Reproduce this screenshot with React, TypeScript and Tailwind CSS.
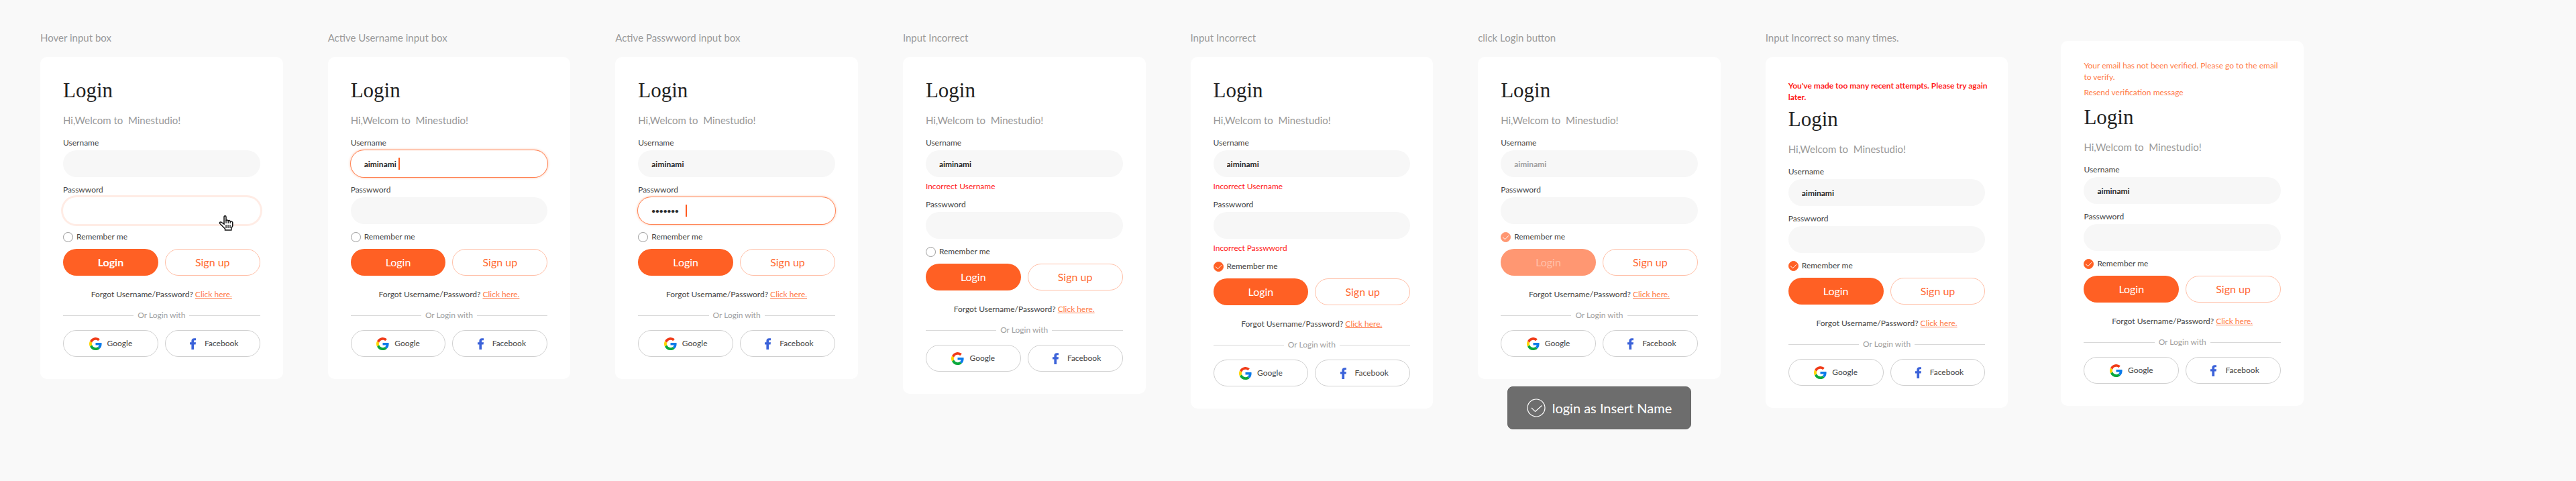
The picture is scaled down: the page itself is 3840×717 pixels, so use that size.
import { useId, type ReactNode } from 'react'
import { clsx } from 'clsx'

type FieldState = 'idle' | 'hover' | 'active'

interface LoginCardProps {
  username?: string
  password?: string
  usernameState?: FieldState
  passwordState?: FieldState
  usernameError?: string
  passwordError?: string
  remember?: boolean
  submitting?: boolean
  boldLogin?: boolean
  notice?: ReactNode
  compact?: boolean
}

function GoogleIcon() {
  return (
    <svg viewBox="0 0 48 48" className="size-[19px]" aria-hidden="true">
      <path fill="#ffd500" d="M10.6 28.7A14.2 14.2 0 0 1 10.6 19.3L2.7 13.2a24 24 0 0 0 0 21.6z" />
      <path fill="#f03a17" d="M24 9.5c3.5 0 6.7 1.2 9.2 3.6l6.9-6.9A24 24 0 0 0 2.7 13.2l7.9 6.1C12.5 13.7 17.7 9.5 24 9.5z" />
      <path fill="#0aa83c" d="M24 48c6.5 0 12-2.1 16-5.8l-7.8-6c-2.1 1.4-4.9 2.3-8.2 2.3-6.3 0-11.5-4.2-13.4-9.8l-7.9 6.1A24 24 0 0 0 24 48z" />
      <path fill="#0b7bea" d="M47 24.5c0-1.6-.2-3.1-.4-4.5H24v9h13c-.6 3-2.3 5.5-4.8 7.2l7.8 6c4.5-4.2 7-10.4 7-17.7z" />
    </svg>
  )
}

function FacebookIcon() {
  return (
    <svg viewBox="0 0 19 19" className="size-[19px]" aria-hidden="true">
      <path fill="#3b62d9" d="M7.4 18V10.6H5V7.2h2.4V5.1C7.4 2.7 9 1.3 11.4 1.3H14v3h-1.5c-1.1 0-1.4.5-1.4 1.4v1.5H14l-.4 3.4h-2.5V18z" />
    </svg>
  )
}

function HandCursor() {
  return (
    <svg viewBox="0 0 22 23" className="absolute right-10 -bottom-[10px] h-[23px] w-[22px]" aria-hidden="true">
      <path
        d="M8 13V2.5q0-1.7 1.5-1.7T11 2.5V7.5q1.8-1.4 3.2.5 1.8-1 3 .8 3-.4 3.6 2v5l-2 3.5V22H9.5v-2L6 16.5 1.5 12q-.5-2.3 2-2L8 13z"
        fill="#fff"
        stroke="#111"
        strokeWidth="1.5"
      />
      <path d="M11 7v5M14.2 8v4M17.2 9v3M11 14v5M14 14v5M17 14v5" fill="none" stroke="#111" strokeWidth="1.3" />
    </svg>
  )
}

function Field({ label, type, value, state = 'idle', error, muted }: {
  label: string
  type: 'text' | 'password'
  value?: string
  state?: FieldState
  error?: string
  muted?: boolean
}) {
  const id = useId()
  return (
    <div className="flex flex-col">
      <label htmlFor={id} className="mb-[3px] text-xs leading-4 text-[#444]">{label}</label>
      <div className="relative">
        <input
          id={id}
          type={type}
          defaultValue={value}
          className={clsx(
            'block h-10 w-full rounded-full px-5 font-bold outline-none',
            type === 'password' ? 'text-[10px]' : 'text-xs',
            muted ? 'text-[#a0a0a0]' : 'text-[#2b2b2b]',
            state === 'idle' && 'bg-[#f7f7f7]',
            state === 'hover' && 'bg-white shadow-[0_0_0_3px_#ffece5]',
            state === 'active' && 'bg-white shadow-[0_0_0_1px_#ff8354,0_0_3px_2px_#ffdccd]',
          )}
        />
        {state === 'active' && <span className="absolute top-[11px] left-[71px] h-[18px] w-[2px] bg-[#ff5a1f]" />}
        {state === 'hover' && <HandCursor />}
      </div>
      {error && <p className="mt-1.5 text-xs leading-4 text-[#ff1a1a]">{error}</p>}
    </div>
  )
}

function LoginCard({
  username, password, usernameState, passwordState, usernameError, passwordError,
  remember = false, submitting = false, boldLogin = false, notice, compact = false,
}: LoginCardProps) {
  return (
    <form className={clsx('flex flex-col rounded-[10px] bg-white px-[34px] pb-[33px]', compact ? 'pt-7' : 'pt-[34px]')} onSubmit={e => e.preventDefault()}>
      {notice}
      <h1 className="font-['Liberation_Serif',serif] text-[31px] leading-8 text-[#222]">Login</h1>
      <p className="mt-[18px] text-[15px] leading-5 whitespace-pre text-[#999]">{'Hi,Welcom to  Minestudio!'}</p>
      <div className="mt-4 flex flex-col gap-[11px]">
        <Field label="Username" type="text" value={username} state={usernameState} error={usernameError} muted={submitting} />
        <Field label="Passwword" type="password" value={password} state={passwordState} error={passwordError} />
        <label className="flex h-4 items-center gap-[5px] text-xs leading-4 text-[#444]">
          <span className="relative flex">
            <input
              type="checkbox"
              defaultChecked={remember}
              className={clsx(
                'peer size-[15px] appearance-none rounded-full border border-[#999]',
                submitting ? 'checked:border-[#ff9772] checked:bg-[#ff9772]' : 'checked:border-[#ff6024] checked:bg-[#ff6024]',
              )}
            />
            <svg viewBox="0 0 15 15" className="pointer-events-none absolute inset-0 hidden size-[15px] peer-checked:block" aria-hidden="true">
              <path d="M3 7.5 6.5 10.8 12 5.2" fill="none" stroke="#fff" strokeWidth="1" />
            </svg>
          </span>
          Remember me
        </label>
      </div>
      <div className="mt-2.5 grid grid-cols-2 gap-2.5">
        <button
          type="submit"
          className={clsx(
            'h-10 rounded-full text-base',
            submitting ? 'bg-[#ff9772] text-[#ffc0a8]' : 'bg-[#ff6024] text-white',
            boldLogin && 'font-bold',
          )}
        >
          Login
        </button>
        <button type="button" className="h-10 rounded-full border border-[#ffbfa7] text-base text-[#ff6a33]">Sign up</button>
      </div>
      <p className="mt-5 text-center text-xs leading-4 text-[#444]">
        Forgot Username/Password? <a href="#" className="text-[#ff7a48] underline">Click here.</a>
      </p>
      <div className="mt-[15px] flex items-center gap-1.5 text-xs leading-4 text-[#a0a0a0]">
        <span className="h-px flex-1 bg-[#d8d8d8]" />
        Or Login with
        <span className="h-px flex-1 bg-[#d8d8d8]" />
      </div>
      <div className="mt-3.5 grid grid-cols-2 gap-2.5 text-xs text-[#444]">
        <button type="button" className="flex h-10 items-center justify-center gap-2 rounded-full border border-[#cfcfcf]">
          <GoogleIcon />
          Google
        </button>
        <button type="button" className="flex h-10 items-center justify-center gap-2 rounded-full border border-[#cfcfcf]">
          <FacebookIcon />
          Facebook
        </button>
      </div>
    </form>
  )
}

function Variant({ title, children }: { title: string; children: ReactNode }) {
  return (
    <section className="min-w-0 flex-1">
      <h2 className="mb-[19px] text-[15px] leading-5 whitespace-nowrap text-[#999]">{title}</h2>
      {children}
    </section>
  )
}

export default function App() {
  return (
    <main className="flex min-h-screen items-start gap-[67px] bg-[#f9f9f9] pt-[46px] pr-[406px] pl-[60px] font-['Lato',sans-serif]">
      <Variant title="Hover input box">
        <LoginCard passwordState="hover" boldLogin />
      </Variant>
      <Variant title="Active Username input box">
        <LoginCard username="aiminami" usernameState="active" />
      </Variant>
      <Variant title="Active Passwword input box">
        <LoginCard username="aiminami" password="1234567" passwordState="active" />
      </Variant>
      <Variant title="Input Incorrect">
        <LoginCard username="aiminami" usernameError="Incorrect Username" />
      </Variant>
      <Variant title="Input Incorrect">
        <LoginCard username="aiminami" usernameError="Incorrect Username" passwordError="Incorrect Passwword" remember />
      </Variant>
      <Variant title="click Login button">
        <LoginCard username="aiminami" remember submitting />
        <div role="status" className="mx-auto mt-[11px] flex h-16 w-[274px] items-center justify-center gap-2.5 rounded-lg border border-[#666] bg-[#6d6d6d] text-xl text-white">
          <svg viewBox="0 0 28 28" className="size-7" fill="none" stroke="currentColor" aria-hidden="true">
            <circle cx="14" cy="14" r="13" strokeWidth="1.2" />
            <path d="M7 14l5.5 5.5L22.5 10.5" strokeWidth="1.2" />
          </svg>
          login as Insert Name
        </div>
      </Variant>
      <Variant title="Input Incorrect so many times.">
        <LoginCard
          username="aiminami"
          remember
          notice={<p className="-mr-3 mb-[9px] text-xs leading-[17px] font-bold text-[#ff1a1a]">You've made too many recent attempts. Please try again later.</p>}
        />
      </Variant>
      <section className="mt-[15px] ml-3 min-w-0 flex-1">
        <LoginCard
          username="aiminami"
          remember
          compact
          notice={
            <div className="mb-[13px] flex flex-col gap-1.5 text-xs leading-[17px] text-[#ff7a48]">
              <p>Your email has not been verified. Please go to the email to verify.</p>
              <a href="#">Resend verification message</a>
            </div>
          }
        />
      </section>
    </main>
  )
}
